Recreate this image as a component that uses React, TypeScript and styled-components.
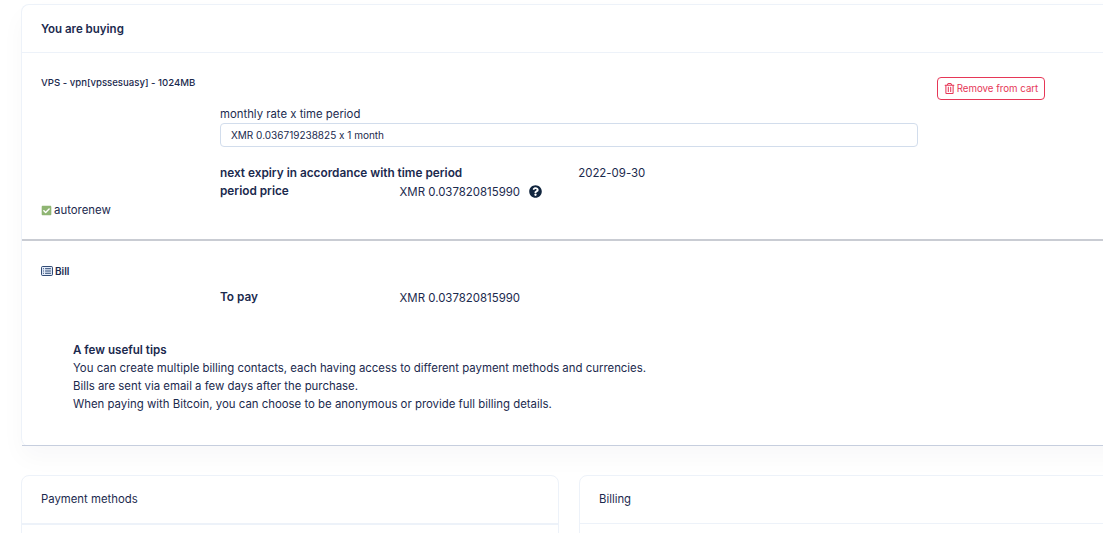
import styled, { createGlobalStyle } from 'styled-components';
import { FaCheckSquare, FaQuestionCircle, FaRegTrashAlt } from 'react-icons/fa';

const GlobalStyle = createGlobalStyle`
	html, body {
		margin: 0;
		height: 533px;
		overflow: hidden;
		background: #fff;
		font-family: Inter, 'Noto Sans', sans-serif;
		font-feature-settings: 'calt' 0;
		color: #1b2a4e;
	}
`;

// Bill glyph: a wide rounded box with three list rows
const BillIcon = () => (
	<svg width="12" height="10" viewBox="0 0 13 11" fill="none" stroke="#163462">
		<rect x="0.5" y="0.5" width="12" height="10" rx="1.2" fill="#e6eefb" />
		<path d="M2.2 3H3.2M2.2 5.5H3.2M2.2 8H3.2M4.4 3H10.8M4.4 5.5H10.8M4.4 8H10.8" />
	</svg>
);

export default function App() {
	return (
		<>
			<GlobalStyle />
			<Page>
				<MainCard>
					<CardHeader>You are buying</CardHeader>
					<ProductSection>
						<ProductInfo>
							<ProductTitle>VPS - vpn[vpssesuasy] - 1024MB</ProductTitle>
							<RateBlock>
								<RateLabel>monthly rate x time period</RateLabel>
								<RateSelect>XMR 0.036719238825 x 1 month</RateSelect>
							</RateBlock>
							<ExpiryRow>
								<DetailName>next expiry in accordance with time period</DetailName>
								<ExpiryDate>2022-09-30</ExpiryDate>
							</ExpiryRow>
							<DetailRow>
								<DetailName $short>period price</DetailName>
								<DetailValue>XMR 0.037820815990</DetailValue>
								<HelpIcon />
							</DetailRow>
							<Autorenew>
								<FaCheckSquare size={11} color="#8fb573" />
								autorenew
							</Autorenew>
						</ProductInfo>
						<RemoveButton>
							<FaRegTrashAlt size={11} />
							Remove from cart
						</RemoveButton>
					</ProductSection>
					<BillSection>
						<BillTitle>
							<BillIcon />
							Bill
						</BillTitle>
						<PayRow>
							<DetailName $short>To pay</DetailName>
							<DetailValue>XMR 0.037820815990</DetailValue>
						</PayRow>
						<Tips>
							<strong>A few useful tips</strong>
							<span>You can create multiple billing contacts, each having access to different payment methods and currencies.</span>
							<span>Bills are sent via email a few days after the purchase.</span>
							<span>When paying with Bitcoin, you can choose to be anonymous or provide full billing details.</span>
						</Tips>
					</BillSection>
				</MainCard>
				<BottomCards>
					<SmallCard $width={538}>
						<SmallHeader $thick>Payment methods</SmallHeader>
					</SmallCard>
					<SmallCard $width={560}>
						<SmallHeader>Billing</SmallHeader>
					</SmallCard>
				</BottomCards>
			</Page>
		</>
	);
}

const Page = styled.div`
	width: 1180px;
	height: 533px;
	overflow: hidden;
	padding: 4px 0 0 21px;
	box-sizing: border-box;
`;

const MainCard = styled.div`
	background: #fff;
	border: 1px solid #edf2f9;
	border-bottom: 0;
	border-radius: 8px;
	box-shadow: 0 12px 24px rgba(18, 38, 63, 0.03);
	height: 442px;
	box-sizing: border-box;
	display: flex;
	flex-direction: column;
`;

const CardHeader = styled.div`
	height: 48px;
	box-sizing: border-box;
	padding: 0 19px;
	display: flex;
	align-items: center;
	border-bottom: 1px solid #edf2f9;
	font-size: 11.5px;
	font-weight: 600;
`;

const ProductSection = styled.div`
	height: 188px;
	box-sizing: border-box;
	border-bottom: 2px solid #c9ccd3;
	padding: 24px 0 0 19px;
	display: flex;
	align-items: flex-start;
`;

const ProductInfo = styled.div`
	width: 877px;
	display: flex;
	flex-direction: column;
`;

const ProductTitle = styled.div`
	font-size: 9.6px;
	font-weight: 500;
	line-height: 12px;
`;

const RateBlock = styled.div`
	margin: 18px 0 0 179px;
	display: flex;
	flex-direction: column;
	gap: 1px;
`;

const RateLabel = styled.div`
	font-size: 11.35px;
	line-height: 15px;
`;

const RateSelect = styled.div`
	height: 24px;
	box-sizing: border-box;
	border: 1px solid #d2ddec;
	border-radius: 4px;
	padding: 0 10px 1px;
	display: flex;
	align-items: center;
	font-size: 10px;
`;

const DetailRow = styled.div`
	margin-left: 179px;
	display: flex;
	align-items: center;
	height: 18px;
`;

const ExpiryRow = styled(DetailRow)`
	margin-top: 17px;
`;

const DetailName = styled.div<{ $short?: boolean }>`
	width: ${(p) => (p.$short ? '179.5px' : 'auto')};
	font-size: 11.8px;
	font-weight: 600;
	white-space: nowrap;
`;

const DetailValue = styled.div`
	font-size: 11.45px;
	padding-top: 2px;
`;

const ExpiryDate = styled(DetailValue)`
	margin-left: 116px;
	padding-top: 0;
`;

const HelpIcon = styled(FaQuestionCircle)`
	font-size: 13px;
	margin-left: 9px;
	color: #12263f;
`;

const Autorenew = styled.div`
	display: flex;
	align-items: center;
	gap: 2px;
	font-size: 11.4px;
	line-height: 14px;
	margin-top: 3px;
`;

const RemoveButton = styled.button`
	margin: 0 0 0 19px;
	width: 108px;
	height: 23px;
	padding: 0;
	background: #fff;
	border: 1px solid #e63757;
	border-radius: 4px;
	color: #e63757;
	display: flex;
	align-items: center;
	justify-content: center;
	gap: 2px;
	font-family: inherit;
	font-size: 9.7px;
`;

const BillSection = styled.div`
	flex: 1;
	padding: 23px 0 0 19px;
	display: flex;
	flex-direction: column;
	border-bottom: 1px solid #c6cede;
`;

const BillTitle = styled.div`
	display: flex;
	align-items: center;
	gap: 2px;
	font-size: 10px;
	font-weight: 600;
	line-height: 14px;
`;

const PayRow = styled.div`
	margin: 10px 0 0 179px;
	display: flex;
	align-items: center;
	height: 18px;
`;

const Tips = styled.div`
	margin: 35px 0 0 32px;
	display: flex;
	flex-direction: column;
	font-size: 11.4px;
	line-height: 18px;

	strong {
		font-size: 11.6px;
		font-weight: 600;
	}
`;

const BottomCards = styled.div`
	display: flex;
	gap: 20px;
	margin-top: 29px;
`;

const SmallCard = styled.div<{ $width: number }>`
	width: ${(p) => p.$width}px;
	height: 100px;
	box-sizing: border-box;
	background: #fff;
	border: 1px solid #edf2f9;
	border-radius: 8px;
`;

const SmallHeader = styled.div<{ $thick?: boolean }>`
	height: ${(p) => (p.$thick ? '49px' : '48px')};
	box-sizing: border-box;
	padding: 0 19px 2px;
	display: flex;
	align-items: center;
	border-bottom: ${(p) => (p.$thick ? '2px' : '1px')} solid #edf2f9;
	font-size: 11.35px;
`;
